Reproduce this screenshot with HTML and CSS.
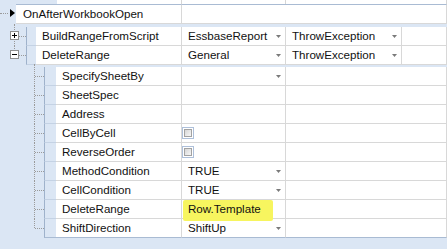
FILE: index.html
```html
<!DOCTYPE html>
<html lang="en">
<head>
  <meta charset="UTF-8">
  <title>Workbook event grid</title>
  <link rel="stylesheet" href="styles.css">
</head>
<body>
  <div class="grid">
    <!-- tail of the band above -->
    <div class="stub">
      <div class="stubLead"></div>
      <div class="stubCell sName"></div>
      <div class="stubCell sVal"></div>
      <div class="stubCell fill"></div>
    </div>

    <!-- level 0 -->
    <div class="row row0">
      <div class="selector"><span class="current"></span></div>
      <div class="cell n0">OnAfterWorkbookOpen</div>
      <div class="cell fill"></div>
    </div>

    <!-- level 1 -->
    <div class="band band1">
      <div class="row">
        <div class="gutter g1 firstKid"><span class="expander plus"></span></div>
        <div class="hdr h1"></div>
        <div class="cell n1">BuildRangeFromScript</div>
        <div class="cell v drop">EssbaseReport</div>
        <div class="cell t1 drop">ThrowException</div>
        <div class="cell fill"></div>
      </div>
      <div class="row">
        <div class="gutter g1 lastKid"><span class="expander"></span></div>
        <div class="hdr h1"></div>
        <div class="cell n1">DeleteRange</div>
        <div class="cell v drop">General</div>
        <div class="cell t1 drop">ThrowException</div>
        <div class="cell fill"></div>
      </div>
    </div>

    <!-- level 2 -->
    <div class="band band2">
      <div class="row">
        <div class="gutter g2 firstKid"></div>
        <div class="hdr h2"></div>
        <div class="cell n2">SpecifySheetBy</div>
        <div class="cell v drop"></div>
        <div class="cell fill"></div>
      </div>
      <div class="row">
        <div class="gutter g2"></div>
        <div class="hdr h2"></div>
        <div class="cell n2">SheetSpec</div>
        <div class="cell v"></div>
        <div class="cell fill"></div>
      </div>
      <div class="row">
        <div class="gutter g2"></div>
        <div class="hdr h2"></div>
        <div class="cell n2">Address</div>
        <div class="cell v"></div>
        <div class="cell fill"></div>
      </div>
      <div class="row">
        <div class="gutter g2"></div>
        <div class="hdr h2"></div>
        <div class="cell n2">CellByCell</div>
        <div class="cell v boxed"><span class="check"></span></div>
        <div class="cell fill"></div>
      </div>
      <div class="row">
        <div class="gutter g2"></div>
        <div class="hdr h2"></div>
        <div class="cell n2">ReverseOrder</div>
        <div class="cell v boxed"><span class="check"></span></div>
        <div class="cell fill"></div>
      </div>
      <div class="row">
        <div class="gutter g2"></div>
        <div class="hdr h2"></div>
        <div class="cell n2">MethodCondition</div>
        <div class="cell v drop">TRUE</div>
        <div class="cell fill"></div>
      </div>
      <div class="row">
        <div class="gutter g2"></div>
        <div class="hdr h2"></div>
        <div class="cell n2">CellCondition</div>
        <div class="cell v drop">TRUE</div>
        <div class="cell fill"></div>
      </div>
      <div class="row">
        <div class="gutter g2"></div>
        <div class="hdr h2"></div>
        <div class="cell n2">DeleteRange</div>
        <div class="cell v"><span class="marker">Row.Template</span></div>
        <div class="cell fill"></div>
      </div>
      <div class="row lastRow">
        <div class="gutter g2 lastKid"></div>
        <div class="hdr h2"></div>
        <div class="cell n2">ShiftDirection</div>
        <div class="cell v drop">ShiftUp</div>
        <div class="cell fill"></div>
      </div>
    </div>
  </div>
</body>
</html>
```

FILE: styles.css
```css
body {
  margin: 0;
  background: #dbe6f4;
  font-family: "Liberation Sans", Arial, sans-serif;
  font-size: 11.6px;
  color: #111;
}

.grid {
  width: 447px;
  height: 249px;
  overflow: hidden;
}

/* bit of the previous band peeking in at the top */
.stub {
  display: flex;
  height: 4px;
}
.stubLead {
  width: 57px;
}
.stubCell {
  box-sizing: border-box;
  background: #fff;
  border-right: 1px solid #d6d6d6;
}
.sName { width: 125px; }
.sVal { width: 104px; }

.row {
  display: flex;
  height: 19px;
}

.cell {
  position: relative;
  box-sizing: border-box;
  background: #fff;
  border-right: 1px solid #d8d8d8;
  border-bottom: 1px solid #d8d8d8;
  padding-left: 6px;
  line-height: 18px;
  white-space: nowrap;
}
.fill { flex: 1; }

/* level 0 */
.row0 {
  height: 20px;
}
.row0 .cell {
  border-top: 1px solid #a9bbd3;
}
.selector {
  position: relative;
  width: 16px;
}
.selector::before { /* connector from the left */
  content: "";
  position: absolute;
  left: 0;
  top: 9px;
  width: 8px;
  border-top: 1px dotted #9a9a9a;
}
.current {
  position: absolute;
  left: 10px;
  top: 5px;
  width: 0;
  height: 0;
  border-left: 5px solid #000;
  border-top: 4.5px solid transparent;
  border-bottom: 4.5px solid transparent;
}
.n0 {
  width: 166px;
  padding-left: 7px;
}

/* child bands */
.band1 {
  padding-top: 3px;
  padding-bottom: 2px;
}

.gutter {
  position: relative;
}
.gutter::before { /* vertical tree line */
  content: "";
  position: absolute;
  top: 0;
  height: 19px;
  border-left: 1px dotted #9a9a9a;
}
.gutter::after { /* branch to the row */
  content: "";
  position: absolute;
  top: 9px;
  border-top: 1px dotted #9a9a9a;
}
.gutter.firstKid::before {
  top: -3px;
  height: 22px;
}
.gutter.lastKid::before {
  height: 9px;
}

.g1 { width: 26px; }
.g1::before { left: 14px; }
.g1::after { left: 15px; width: 11px; }

.g2 { width: 44px; }
.g2::before { left: 34px; }
.g2::after { left: 35px; width: 9px; }

.expander {
  position: absolute;
  z-index: 1;
  left: 10px;
  top: 4px;
  width: 9px;
  height: 9px;
  box-sizing: border-box;
  border: 1px solid #8f8f8f;
  background: #fff;
}
.expander::before {
  content: "";
  position: absolute;
  left: 1px;
  top: 3px;
  width: 5px;
  height: 1px;
  background: #000;
}
.expander.plus::after {
  content: "";
  position: absolute;
  left: 3px;
  top: 1px;
  width: 1px;
  height: 5px;
  background: #000;
}

.hdr {
  box-sizing: border-box;
  border-left: 1px solid #9fb2cb;
  border-bottom: 1px solid #c4d2e4;
}
.h1 { width: 10px; }
.h2 { width: 12px; }

.n1 { width: 146px; }
.n2 { width: 126px; }
.v { width: 104px; }
.t1 { width: 116px; }

.lastRow .cell,
.lastRow .hdr {
  border-bottom-color: #a9bbd3;
}

/* combo arrow */
.drop::after {
  content: "";
  position: absolute;
  right: 4px;
  top: 8px;
  width: 5px;
  height: 3px;
  background: #7a7a7a;
  clip-path: polygon(0 0, 100% 0, 50% 100%);
}

/* checkbox editor */
.boxed {
  padding-left: 0;
}
.check {
  display: block;
  width: 12px;
  height: 12px;
  margin-top: 3px;
  box-sizing: border-box;
  border: 1px solid #aec0da;
  padding: 1px;
  background: #fff;
}
.check::before {
  content: "";
  display: block;
  width: 100%;
  height: 100%;
  box-sizing: border-box;
  border: 1px solid #a2a2a2;
  background: linear-gradient(135deg, #d6d6d6, #f7f7f7);
}

/* highlighter mark */
.marker {
  display: block;
  position: relative;
  z-index: 1;
  width: 90px;
  height: 21px;
  margin-left: -5px;
  padding-left: 5px;
  box-sizing: border-box;
  background: #f7f55f;
  border-radius: 2px;
}
```
